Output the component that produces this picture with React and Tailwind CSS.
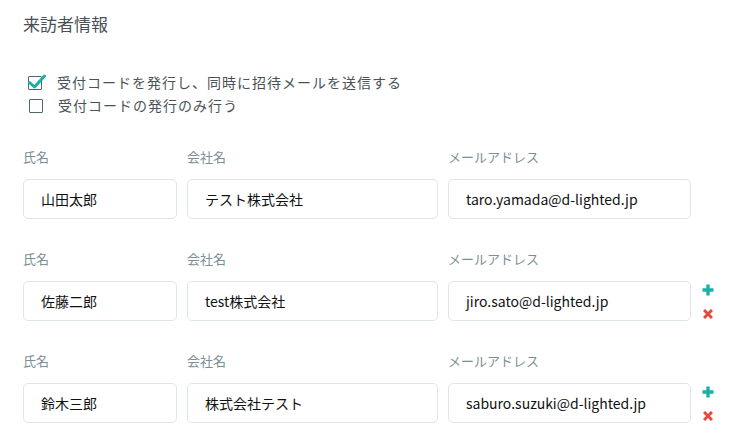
import React from "react";

const visitors = [
  { name: "山田太郎", company: "テスト株式会社", email: "taro.yamada@d-lighted.jp", actions: false },
  { name: "佐藤二郎", company: "test株式会社", email: "jiro.sato@d-lighted.jp", actions: true },
  { name: "鈴木三郎", company: "株式会社テスト", email: "saburo.suzuki@d-lighted.jp", actions: true },
];

const font = { fontFamily: '"Noto Sans CJK JP", Lato, sans-serif' };

const CheckBox = ({ checked }) => (
  <span className="relative block w-[14px] h-[14px] border-[1.5px] border-[#4b6a70] rounded-[1px]">
    {checked && (
      <svg className="absolute -left-[1px] -top-[3px]" width="18" height="16" viewBox="0 0 18 16">
        <path d="M1.5 8.5 L6.5 13 L16.5 2" fill="none" stroke="#18b0a5" strokeWidth="3" strokeLinecap="round" strokeLinejoin="round" />
      </svg>
    )}
  </span>
);

const Field = ({ label, value, width }) => (
  <div className="flex flex-col" style={{ width }}>
    <div className="h-[18px] leading-[18px] text-[13px] text-[#7b8f95]">{label}</div>
    <div className="mt-[13px] h-[40px] flex items-center px-[17px] bg-white border border-[#dfe5ec] rounded-[5px] text-[14px] font-normal text-[#111]">
      {value}
    </div>
  </div>
);

export default function App() {
  return (
    <div className="min-h-screen bg-white pt-[12px] px-[23px]" style={font}>
      <h2 className="h-[24px] leading-[24px] text-[17px] text-[#4a4f55]">来訪者情報</h2>

      <div className="mt-[35px] flex flex-col text-[14px] text-[#4a5258] tracking-[1px]">
        <label className="h-[23px] flex items-center gap-[15px] pl-[5px]">
          <CheckBox checked />
          <span>受付コードを発行し、同時に招待メールを送信する</span>
        </label>
        <label className="h-[23px] flex items-center gap-[15px] pl-[6px]">
          <CheckBox />
          <span>受付コードの発行のみ行う</span>
        </label>
      </div>

      {visitors.map((v, i) => (
        <div key={i} className="mt-[31px] flex gap-[10px]">
          <Field label="氏名" value={v.name} width={154} />
          <Field label="会社名" value={v.company} width={251} />
          <Field label="メールアドレス" value={v.email} width={243} />
          {v.actions && (
            <div className="mt-[31px] ml-[1px] flex flex-col items-center w-[12px]">
              <svg className="mt-[3px]" width="12" height="12" viewBox="0 0 12 12">
                <path d="M6 0.5 V11.5 M0.5 6 H11.5" stroke="#19b1a6" strokeWidth="3.4" />
              </svg>
              <svg className="mt-[13px]" width="10" height="10" viewBox="0 0 10 10">
                <path d="M1 1 L9 9 M9 1 L1 9" stroke="#e54b3c" strokeWidth="3" />
              </svg>
            </div>
          )}
        </div>
      ))}
    </div>
  );
}
